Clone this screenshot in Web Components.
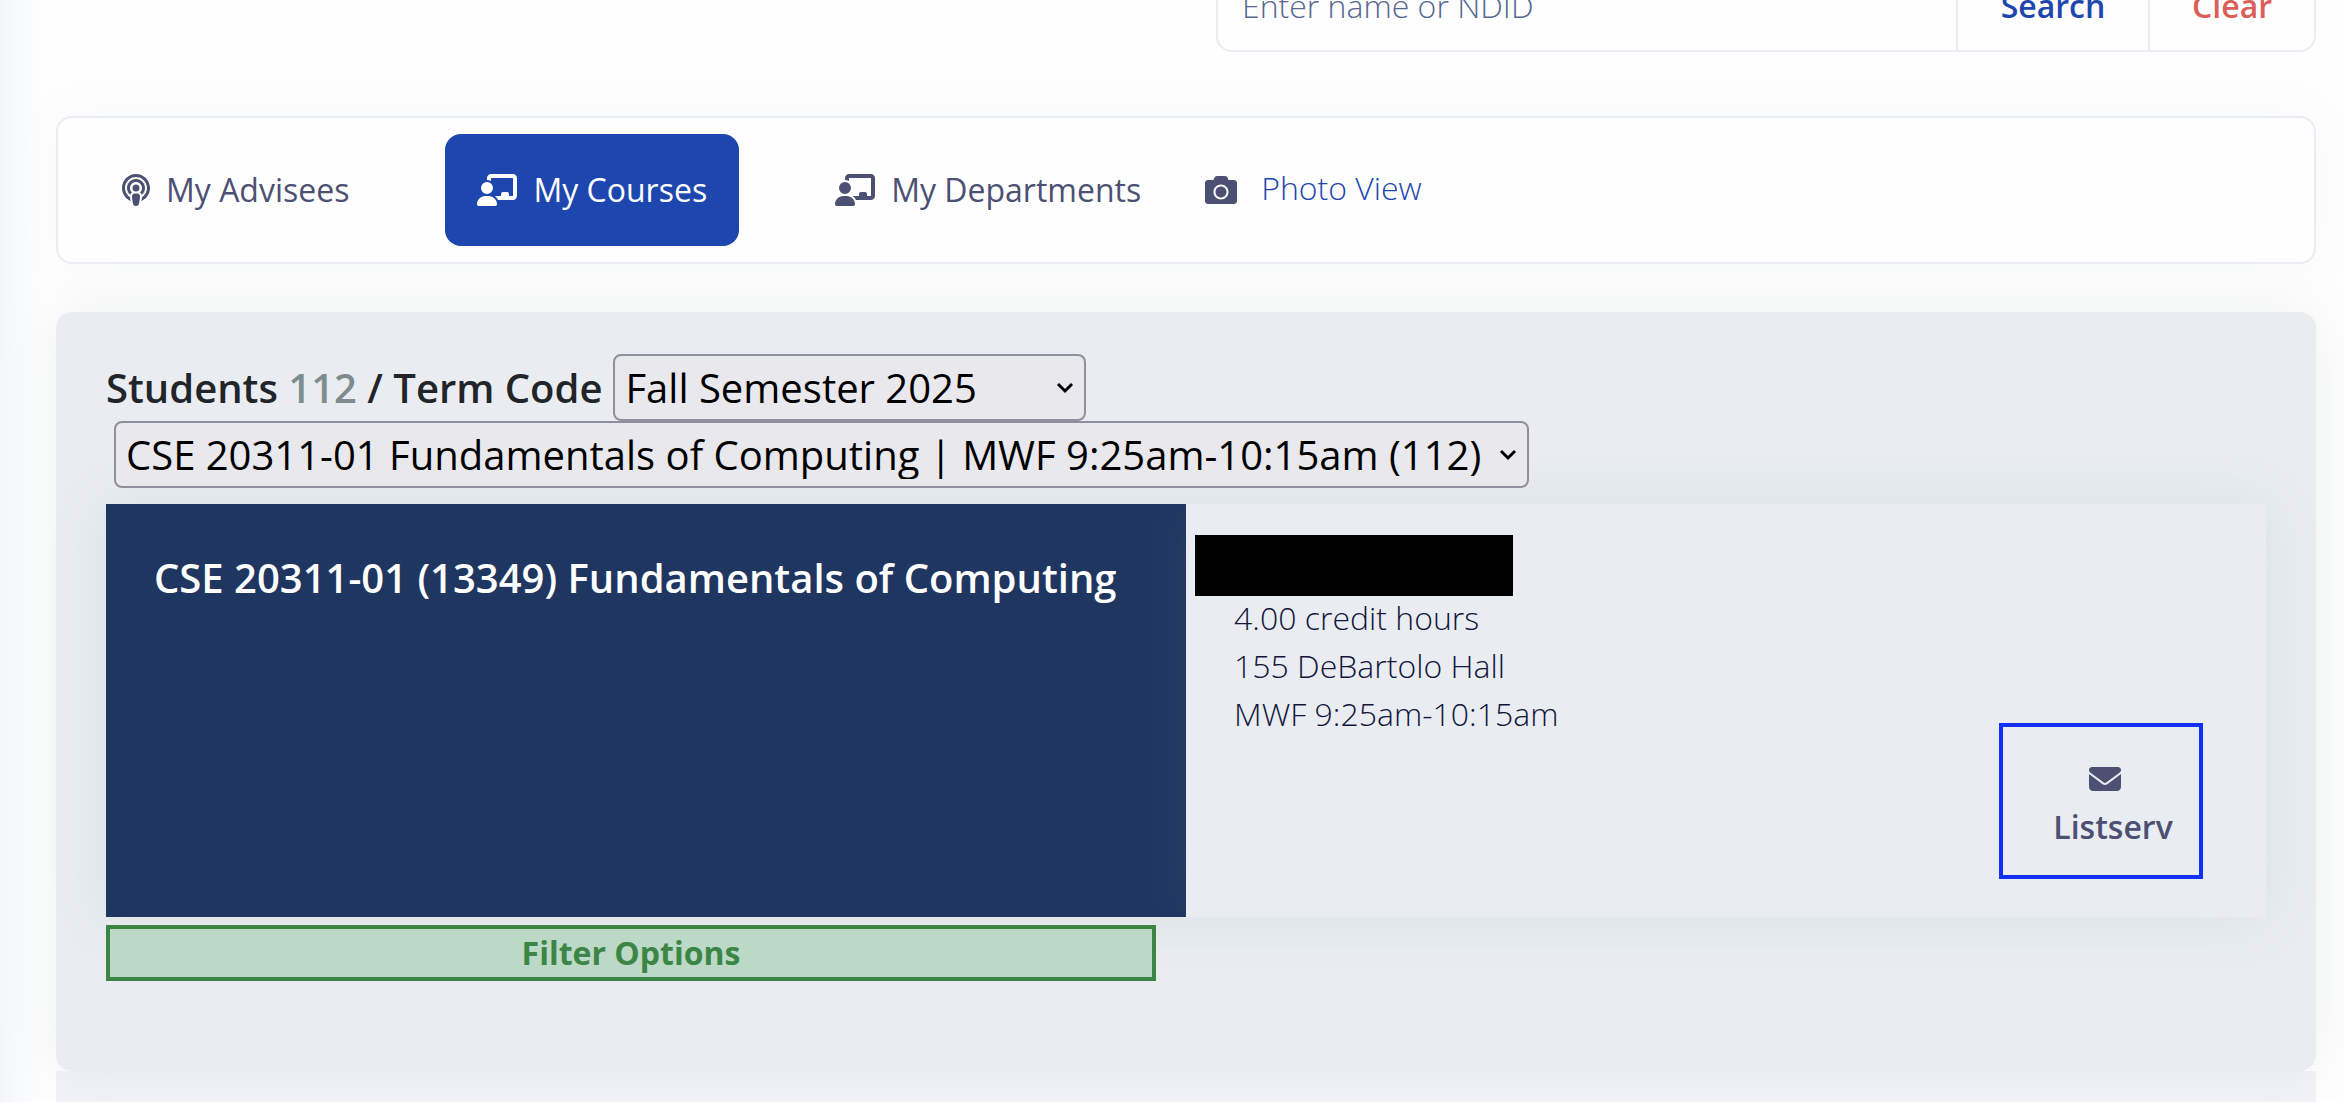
<!DOCTYPE html>
<html lang="en">
<head>
<meta charset="utf-8">
<title>Students</title>
<style>
  :root {
    --ink: #4c5072;
    --blue: #1e46af;
    --line: #e9ecf2;
    --panel: #e9edf2;
    --lift: 0 0 56px rgba(126, 142, 145, .12);
  }
  html { background: #fefefe; }
  body {
    margin: 0;
    min-height: 100vh;
    overflow: hidden;
    font: 400 32px/48px "Open Sans", "Noto Sans", sans-serif;
    color: var(--ink);
    background: linear-gradient(to right, #f4f7fa, #fefefe 44px);
  }
</style>
</head>
<body>
<roster-page>
  <search-bar slot="search"></search-bar>
  <nav-card slot="nav">
    <nav-tab icon="podcast">My Advisees</nav-tab>
    <nav-tab icon="board" active>My Courses</nav-tab>
    <nav-tab icon="board">My Departments</nav-tab>
    <photo-link>Photo View</photo-link>
  </nav-card>
  <course-panel>
    <term-picker slot="picker" count="112"></term-picker>
    <course-card heading="CSE 20311-01 (13349) Fundamentals of Computing">
      <span>4.00 credit hours</span>
      <span>155 DeBartolo Hall</span>
      <span>MWF 9:25am-10:15am</span>
      <listserv-button slot="action">Listserv</listserv-button>
    </course-card>
    <filter-button slot="filter">Filter Options</filter-button>
  </course-panel>
</roster-page>

<script>
const BASE = `<style>
  *, *::before, *::after { box-sizing: border-box; }
  button, input, select { font: inherit; color: inherit; margin: 0; border-radius: 0; }
</style>`;

const define = (name, render) => customElements.define(name, class extends HTMLElement {
  connectedCallback() {
    if (this.shadowRoot) return;
    this.attachShadow({ mode: 'open' }).innerHTML = BASE + render(this);
  }
});

const ICONS = {
  podcast: ['0 0 448 512', 'M319.4 372c48.5-31.3 80.6-85.9 80.6-148c0-97.2-78.8-176-176-176S48 126.8 48 224c0 62.1 32.1 116.6 80.6 148c1.2 17.3 4 38 7.2 57.1l.2 1C56 395.8 0 316.5 0 224C0 100.3 100.3 0 224 0S448 100.3 448 224c0 92.5-56 171.9-136 206.1l.2-1.1c3.1-19.2 6-39.8 7.2-57zm-2.3-38.1c-1.6-5.7-3.9-11.1-7-16.2c-5.8-9.7-13.5-17-21.9-22.4c19.5-17.6 31.8-43 31.8-71.3c0-53-43-96-96-96s-96 43-96 96c0 28.3 12.3 53.8 31.8 71.3c-8.4 5.4-16.1 12.7-21.9 22.4c-3.1 5.1-5.4 10.5-7 16.2C99.8 307.5 80 268 80 224c0-79.5 64.5-144 144-144s144 64.5 144 144c0 44-19.8 83.5-50.9 109.9zM224 312c32.9 0 64 8.6 64 43.8c0 33-12.9 104.1-20.6 132.9c-5.1 19-24.5 23.4-43.4 23.4s-38.2-4.4-43.4-23.4c-7.8-28.5-20.6-99.7-20.6-132.8c0-35.1 31.1-43.8 64-43.8zm0-144a56 56 0 1 1 0 112 56 56 0 1 1 0-112z'],
  board: ['0 0 640 512', 'M160 64c0-35.3 28.7-64 64-64H576c35.3 0 64 28.7 64 64V352c0 35.3-28.7 64-64 64H336.8c-11.8-25.5-29.9-47.5-52.4-64H384V320c0-17.7 14.3-32 32-32h64c17.7 0 32 14.3 32 32v32h64V64L224 64v49.1C205.2 102.2 183.3 96 160 96V64zm0 64a96 96 0 1 1 0 192 96 96 0 1 1 0-192zM133.3 352h53.3C260.3 352 320 411.7 320 485.3c0 14.7-11.9 26.7-26.7 26.7H26.7C11.9 512 0 500.1 0 485.3C0 411.7 59.7 352 133.3 352z'],
  camera: ['0 0 512 512', 'M512 144v288c0 26.5-21.5 48-48 48H48c-26.5 0-48-21.5-48-48V144c0-26.5 21.5-48 48-48h88l12.3-32.9c7-18.7 24.9-31.1 44.9-31.1h125.5c20 0 37.9 12.4 44.9 31.1L376 96h88c26.5 0 48 21.5 48 48zM376 288c0-66.2-53.8-120-120-120s-120 53.8-120 120 53.8 120 120 120 120-53.8 120-120zm-32 0c0 48.5-39.5 88-88 88s-88-39.5-88-88 39.5-88 88-88 88 39.5 88 88z'],
  envelope: ['0 0 512 512', 'M48 64C21.5 64 0 85.5 0 112c0 15.1 7.1 29.3 19.2 38.4L236.8 313.6c11.4 8.5 27 8.5 38.4 0L492.8 150.4c12.1-9.1 19.2-23.3 19.2-38.4c0-26.5-21.5-48-48-48H48zM0 176V384c0 35.3 28.7 64 64 64H448c35.3 0 64-28.7 64-64V176L294.4 339.2c-22.8 17.1-54 17.1-76.8 0L0 176z']
};

define('ui-icon', el => {
  const [box, d] = ICONS[el.getAttribute('name')];
  return `<style>:host { display: inline-flex; flex: none; } svg { height: 32px; display: block; fill: currentColor; }</style>
    <svg viewBox="${box}" aria-hidden="true"><path d="${d}"/></svg>`;
});

define('roster-page', () => `<style>
    :host { display: flex; flex-direction: column; margin-top: -40px; padding: 0 28px 0 56px; }
    header { display: flex; justify-content: flex-end; margin-bottom: 64px; }
    ::slotted([slot=search]) { width: 1100px; }
    nav { margin-bottom: 48px; display: grid; }
    .next { height: 64px; background: #f2f3f9; }
    main { position: relative; }
  </style>
  <header><slot name="search"></slot></header>
  <nav><slot name="nav"></slot></nav>
  <main><slot></slot></main>
  <div class="next"></div>`);

define('search-bar', () => `<style>
    :host { display: block; }
    form { display: flex; height: 92px; border: 2px solid var(--line); border-radius: 16px; background: #fefefe; overflow: hidden; }
    input { flex: 1; min-width: 0; border: 0; padding: 0 24px; background: none; font-weight: 300; outline: 0; }
    input::placeholder { color: #566790; opacity: 1; }
    button { border: 0; border-left: 2px solid var(--line); background: none; padding: 0; min-width: 192px; font-weight: 600; color: var(--blue); }
    .clear { color: #dc5e58; min-width: 166px; }
  </style>
  <form onsubmit="return false">
    <input type="text" aria-label="Enter name or NDID" placeholder="Enter name or NDID">
    <button type="submit">Search</button><button type="reset" class="clear">Clear</button>
  </form>`);

define('nav-card', () => `<style>
    :host { display: flex; align-items: center; flex-wrap: wrap; padding: 16px 32px; gap: 64px;
      border: 2px solid var(--line); border-radius: 16px; background: #fefefe; box-shadow: 0 0 56px rgba(126, 142, 145, .05); }
  </style><slot></slot>`);

define('nav-tab', el => `<style>
    :host { display: block; }
    button { display: flex; align-items: center; gap: 16px; height: 112px; padding: 0 32px; border: 0; border-radius: 16px; background: none; white-space: nowrap; }
    :host([active]) button { background: var(--blue); color: #fff; }
  </style>
  <button type="button"><ui-icon name="${el.getAttribute('icon')}"></ui-icon><slot></slot></button>`);

define('photo-link', () => `<style>
    :host { display: flex; align-items: center; gap: 24px; margin-left: -32px; }
    a { color: var(--blue); font-weight: 300; text-decoration: none; padding-bottom: 4px; }
  </style><ui-icon name="camera"></ui-icon><a href="#photos"><slot></slot></a>`);

define('course-panel', () => `<style>
    :host { display: block; padding: 42px 50px 90px; border-radius: 16px; background: var(--panel); box-shadow: var(--lift); }
    .picker { margin-bottom: 16px; }
    .filter { margin-top: 8px; }
  </style>
  <div class="picker"><slot name="picker"></slot></div>
  <slot></slot>
  <div class="filter"><slot name="filter"></slot></div>`);

define('term-picker', el => `<style>
    :host { display: block; font-size: 40px; color: #212529; }
    .row { display: flex; align-items: center; gap: 11px; }
    .row + .row { padding-left: 8px; }
    h2 { margin: 0; font-size: 40px; font-weight: 600; line-height: 60px; }
    .count { color: #7f8c8d; }
    .pick { display: inline-grid; align-items: center; }
    .pick > * { grid-area: 1 / 1; }
    .term { width: 473px; }
    select { appearance: none; height: 67px; width: 100%; padding: 0 45px 0 10px; color: #000;
      background: #e9e8ed; border: 2px solid #8f8f9d; border-radius: 8px; }
    svg { justify-self: end; margin-right: 12px; width: 18px; height: 12px; fill: none; stroke: #000; stroke-width: 3; pointer-events: none; }
  </style>
  <div class="row">
    <h2>Students <span class="count">${el.getAttribute('count')}</span> / <label for="term">Term Code</label></h2>
    <span class="pick term"><select id="term"><option>Fall Semester 2025</option></select>
      <svg viewBox="0 0 18 12"><path d="M2 2l7 7 7-7"/></svg></span>
  </div>
  <div class="row">
    <span class="pick"><select aria-label="Course"><option>CSE 20311-01 Fundamentals of Computing | MWF 9:25am-10:15am (112)</option></select>
      <svg viewBox="0 0 18 12"><path d="M2 2l7 7 7-7"/></svg></span>
  </div>`);

define('course-card', el => `<style>
    :host { display: grid; grid-template-columns: 1fr 1fr; min-height: 413px; box-shadow: var(--lift); }
    .title { background: #1f3661; color: #fff; padding: 44px 48px; }
    h3 { margin: 0; font-size: 40px; line-height: 60px; font-weight: 600; }
    .info { display: flex; flex-direction: column; background: var(--panel); box-shadow: var(--lift); clip-path: inset(0 0 0 -80px);
      padding: 31px 63px 38px 48px; font-weight: 300; color: #13163a; }
    .redacted { width: 318px; height: 61px; margin: 0 0 -2px -39px; background: #000; }
    .details { flex: 1; display: flex; justify-content: space-between; }
    .lines { display: flex; flex-direction: column; }
    .action { align-self: flex-end; }
  </style>
  <div class="title"><h3>${el.getAttribute('heading')}</h3></div>
  <div class="info">
    <div class="redacted"></div>
    <div class="details">
      <div class="lines"><slot></slot></div>
      <div class="action"><slot name="action"></slot></div>
    </div>
  </div>`);

define('listserv-button', () => `<style>
    :host { display: block; }
    button { display: flex; flex-direction: column; align-items: center; min-width: 204px; padding: 28px 24px 24px 48px;
      border: 4px solid #1230fa; background: none; color: var(--ink); font-weight: 600; }
    .icon { height: 48px; display: flex; align-items: center; padding-right: 16px; }
  </style>
  <button type="button"><span class="icon"><ui-icon name="envelope"></ui-icon></span><slot></slot></button>`);

define('filter-button', () => `<style>
    :host { display: block; }
    button { display: block; width: 1050px; max-width: 100%; height: 56px; padding: 0; border: 4px solid #3c8645; background: #bcd9c8; color: #3c8645; font-weight: 700; line-height: 48px; }
  </style><button type="button"><slot></slot></button>`);
</script>
</body>
</html>
